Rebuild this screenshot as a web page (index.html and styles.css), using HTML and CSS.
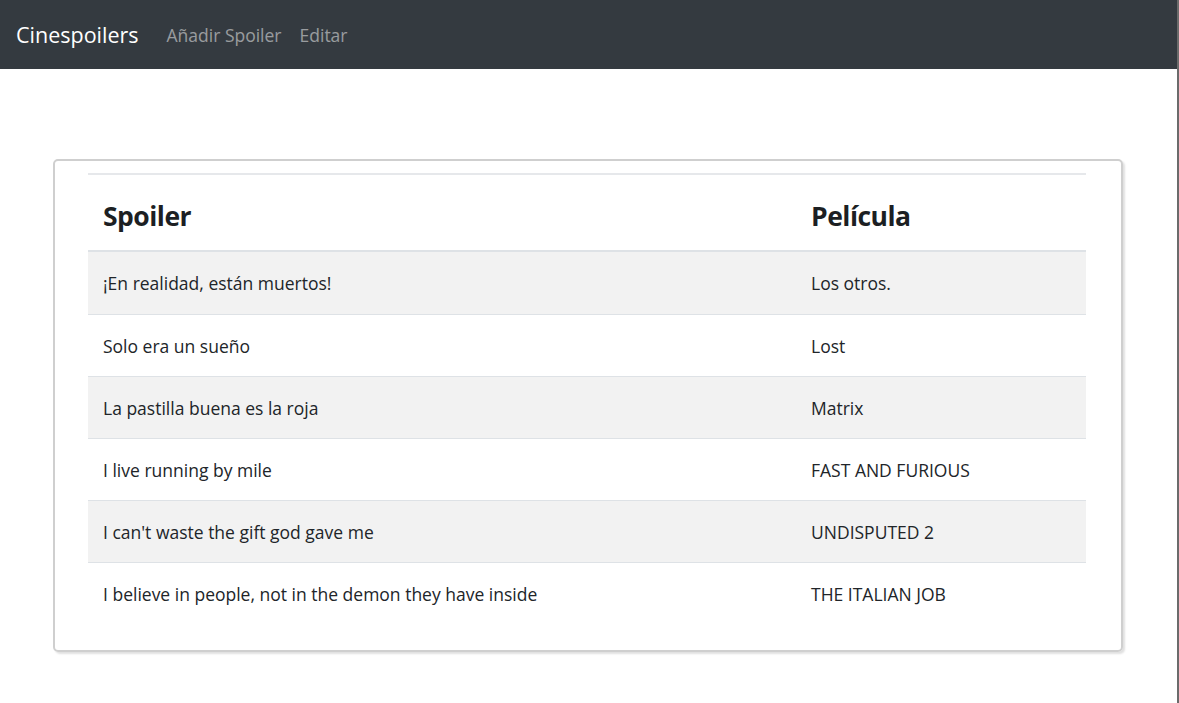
FILE: index.html
```html
<!DOCTYPE html>
<html lang="es">
<head>
<meta charset="utf-8">
<title>Cinespoilers</title>
<link rel="stylesheet" href="styles.css">
</head>
<body>
<div class="page">
  <nav class="navbar">
    <a class="brand" href="#">Cinespoilers</a>
    <a class="nav-link" href="#">Añadir Spoiler</a>
    <a class="nav-link" href="#">Editar</a>
  </nav>
  <main class="main">
    <div class="card">
      <table class="table">
        <thead>
          <tr><th class="col-spoiler">Spoiler</th><th>Película</th></tr>
        </thead>
        <tbody>
          <tr class="odd"><td>¡En realidad, están muertos!</td><td>Los otros.</td></tr>
          <tr><td>Solo era un sueño</td><td>Lost</td></tr>
          <tr class="odd"><td>La pastilla buena es la roja</td><td>Matrix</td></tr>
          <tr><td>I live running by mile</td><td>FAST AND FURIOUS</td></tr>
          <tr class="odd"><td>I can't waste the gift god gave me</td><td>UNDISPUTED 2</td></tr>
          <tr><td>I believe in people, not in the demon they have inside</td><td>THE ITALIAN JOB</td></tr>
        </tbody>
      </table>
    </div>
  </main>
</div>
</body>
</html>
```
FILE: styles.css
```css
html, body {
  margin: 0;
  padding: 0;
  background: #fff;
}
body {
  font-family: "Open Sans", "Noto Sans", sans-serif;
  color: #212529;
}
.page {
  width: 1177px;
  min-height: 703px;
  border-right: 2px solid #6b6b6b;
  box-sizing: content-box;
}
.navbar {
  height: 69px;
  background: #343a40;
  display: flex;
  align-items: center;
  padding: 0 16px;
  box-sizing: border-box;
}
.brand {
  color: #fff;
  text-decoration: none;
  font-size: 21.5px;
  margin-right: 28px;
}
.nav-link {
  color: rgba(255, 255, 255, 0.5);
  text-decoration: none;
  font-size: 17.5px;
  margin-right: 18px;
}
.main {
  padding: 90px 53px 0 53px;
}
.card {
  width: 1070px;
  box-sizing: border-box;
  border: 2px solid #cfcfcf;
  border-radius: 5px;
  box-shadow: 2px 2px 2px rgba(0, 0, 0, 0.12);
  padding: 12px 35px 26px 33px;
}
.table {
  width: 998px;
  border-collapse: collapse;
  table-layout: fixed;
}
.table th, .table td {
  text-align: left;
  padding: 0 15px;
  vertical-align: middle;
}
.table th {
  height: 69px;
  padding-top: 6px;
  border-top: 2px solid #e6e8eb;
  border-bottom: 2px solid #dee2e6;
  font-size: 26.5px;
  font-weight: 700;
  letter-spacing: -0.5px;
  color: #1c1f23;
}
.col-spoiler {
  width: 678px;
}
.table td {
  height: 61px;
  border-top: 1px solid #dee2e6;
  font-size: 17.5px;
  color: #212529;
}
.table tbody tr:first-child td {
  border-top: none;
  height: 62px;
}
.table tr.odd td {
  background: #f2f2f2;
}
```
